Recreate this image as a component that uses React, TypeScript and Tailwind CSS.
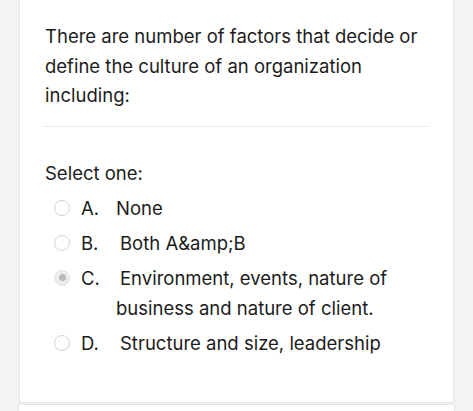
import React from "react";

const options = [
  { letter: "A.", text: "None", indent: false, checked: false },
  { letter: "B.", text: "Both A&amp;B", indent: true, checked: false },
  { letter: "C.", text: "Environment, events, nature of business and nature of client.", indent: true, checked: true },
  { letter: "D.", text: "Structure and size, leadership", indent: true, checked: false },
];

export default function App() {
  return (
    <div
      className="w-[473px] h-[411px] overflow-hidden bg-[#f3f3f3] text-[#1c1c1c]"
      style={{ fontFamily: 'Inter, "Liberation Sans", Arial, sans-serif' }}
    >
      <div className="ml-[19px] w-[435px] h-[403px] bg-white border-x border-b border-[#e6e6e6] pl-[25px] pr-[23px] pt-[22px]">
        <div className="text-[18.5px] leading-[29.5px] pr-[6px]">
          There are number of factors that decide or define the culture of an organization including:
        </div>
        <div className="mt-[15px] h-px bg-[#ebebeb] -ml-[2px]" />
        <div className="mt-[31px] text-[18.5px] leading-[30px]">Select one:</div>
        <div className="mt-[5px] flex flex-col gap-[5px]">
          {options.map((o) => (
            <div key={o.letter} className="flex items-start text-[18.5px] leading-[30px]">
              <div className="w-[36px] h-[30px] flex items-center pl-[9px] shrink-0">
                {o.checked ? (
                  <span className="w-[16px] h-[16px] rounded-full bg-[#ededed] border border-[#e0e0e0] flex items-center justify-center">
                    <span className="w-[7px] h-[7px] rounded-full bg-[#b8b8b8]" />
                  </span>
                ) : (
                  <span className="w-[16px] h-[16px] rounded-full bg-white border border-[#d4d4d4]" />
                )}
              </div>
              <span className="w-[35px] shrink-0">{o.letter}</span>
              <span className={o.indent ? "indent-[4px] w-[300px]" : "w-[300px]"}>{o.text}</span>
            </div>
          ))}
        </div>
      </div>
      <div className="mt-[1px] ml-[18px] w-[437px] h-[20px] bg-white border-x border-t border-[#e6e6e6]" />
    </div>
  );
}
